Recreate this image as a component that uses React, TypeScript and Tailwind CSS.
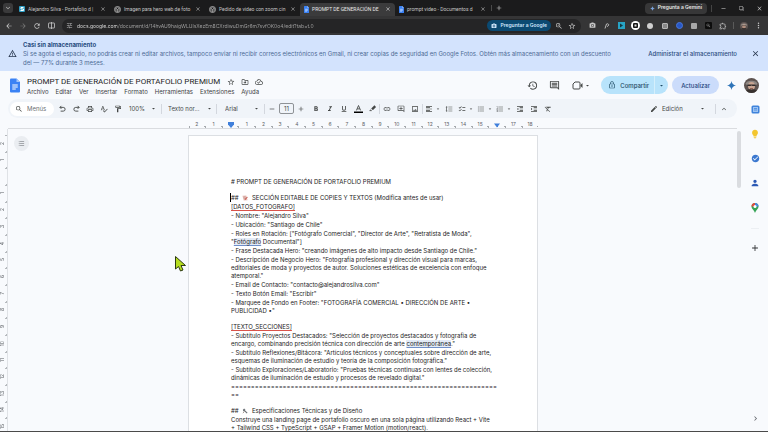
import type { ReactNode } from 'react';
import type { IconType } from 'react-icons';
import {
  MdAdd,
  MdArrowBack,
  MdArrowDropDown,
  MdArrowForward,
  MdCameraAlt,
  MdCheckCircle,
  MdChecklist,
  MdChevronRight,
  MdClose,
  MdEdit,
  MdExpandLess,
  MdExpandMore,
  MdFilterNone,
  MdFormatAlignLeft,
  MdFormatBold,
  MdFormatClear,
  MdFormatIndentDecrease,
  MdFormatIndentIncrease,
  MdFormatItalic,
  MdFormatLineSpacing,
  MdFormatListBulleted,
  MdFormatListNumbered,
  MdFormatUnderlined,
  MdHistory,
  MdLightbulb,
  MdLink,
  MdLockOutline,
  MdMoreVert,
  MdOutlineAddComment,
  MdOutlineCloudDone,
  MdOutlineComment,
  MdOutlineDriveFileMove,
  MdOutlineExtension,
  MdOutlineFormatPaint,
  MdOutlineImage,
  MdOutlinePrint,
  MdPerson,
  MdRefresh,
  MdRemove,
  MdSearch,
  MdSpellcheck,
  MdStarBorder,
  MdTune,
  MdWarningAmber,
  MdZoomIn,
} from 'react-icons/md';

const DocIcon = ({ className }: { className: string }) => (
  <svg viewBox="0 0 20 28" className={className} aria-hidden="true">
    <path d="M2 0h11l7 7v19a2 2 0 0 1-2 2H2a2 2 0 0 1-2-2V2a2 2 0 0 1 2-2z" fill="#3b82f4" />
    <path d="M13 0l7 7h-7z" fill="#a5c7fb" />
    <path d="M4.500 13h11M4.500 17h11M4.500 21h7" stroke="#fff" strokeWidth="2" />
  </svg>
);

const GptIcon = () => (
  <svg viewBox="0 0 16 16" className="size-[7px] shrink-0" fill="none" stroke="#d8d8d8" aria-hidden="true">
    <circle cx="8" cy="8" r="7" strokeWidth="1.500" />
    <path d="M8 3l4 2.500v5L8 13l-4-2.500v-5zM4 5.500l4 2.500 4-2.500M8 8v5" strokeWidth="1.300" />
  </svg>
);

const SiteIcon = () => (
  <svg viewBox="0 0 12 12" className="size-[6px] shrink-0" aria-hidden="true">
    <rect width="12" height="12" rx="2" fill="#2f9fc6" />
    <path d="M9 3H4v3h5v3H3" fill="none" stroke="#fff" strokeWidth="2" />
  </svg>
);

const Spark = ({ className }: { className: string }) => (
  <svg viewBox="0 0 24 24" className={className} aria-hidden="true">
    <path d="M12 0c1 7 5 11 12 12-7 1-11 5-12 12-1-7-5-11-12-12 7-1 11-5 12-12z" fill="currentColor" />
  </svg>
);

const Avatar = ({ className }: { className: string }) => (
  <svg viewBox="0 0 30 30" className={className} aria-hidden="true">
    <clipPath id="face">
      <circle cx="15" cy="15" r="15" />
    </clipPath>
    <g clipPath="url(#face)">
      <rect width="30" height="30" fill="#5d5350" />
      <path d="M3 12C4 3 26 3 27 12l-3 2H6z" fill="#8f8884" />
      <ellipse cx="15" cy="16" rx="7" ry="8" fill="#c9a592" />
      <path d="M7 13h16v3h-6l-2-1-2 1H7z" fill="#2f2a2a" />
      <path d="M3 30c1-7 6-8 12-7 6-1 11 0 12 7z" fill="#37312f" />
      <path d="M12 21h6" stroke="#7d4e43" strokeWidth="1.500" />
    </g>
  </svg>
);

const tabs = [
  { title: 'Alejandro Silva - Portafolio d |', icon: <SiteIcon /> },
  { title: 'Imagen para hero web de foto', icon: <GptIcon /> },
  { title: 'Pedido de video con zoom cin', icon: <GptIcon /> },
  { title: 'PROMPT DE GENERACIÓN DE', icon: <DocIcon className="h-[7px] w-[5px] shrink-0" />, active: true },
  { title: 'prompt video - Documentos d', icon: <DocIcon className="h-[7px] w-[5px] shrink-0" /> },
];

const TabBar = () => (
  <div className="flex h-4 items-center bg-[#1b1b1c] text-[#c4c4c4]">
    <button aria-label="Buscar pestañas" className="ml-[3px] mr-[2px] flex size-[10px] items-center justify-center rounded-[3px] bg-[#3a3a3b]">
      <MdExpandMore className="size-[8px]" />
    </button>
    <div className="flex h-full items-end">
      {tabs.map((tab) => (
        <div
          key={tab.title}
          className={`flex h-[13px] w-[95px] items-center gap-[3px] rounded-t-[4px] px-[4px] pb-px ${
            tab.active ? 'bg-[#3b3b3c] text-[#e6e6e6]' : ''
          }`}
        >
          {tab.icon}
          <button className="flex-1 whitespace-nowrap text-left font-[Roboto,sans-serif] text-[5px] leading-[10px]">
            {tab.title}
          </button>
          <button aria-label={`Cerrar ${tab.title}`}>
            <MdClose className="size-[6px]" />
          </button>
        </div>
      ))}
    </div>
    <span className="ml-px h-[6px] w-px bg-[#4a4a4a]" />
    <button aria-label="Nueva pestaña" className="ml-[3px]">
      <MdAdd className="size-[8px]" />
    </button>
    <div className="ml-auto flex items-center">
      <button className="flex h-[11px] items-center gap-[3px] rounded-[4px] bg-[#373738] px-[5px] text-[5px] font-semibold text-[#e6e6e6]">
        <Spark className="size-[5px] text-[#7ba4dd]" />
        Pregunta a Gemini
      </button>
      <span className="ml-[4px] h-[7px] w-px bg-[#444]" />
      <button aria-label="Minimizar" className="ml-[8px]">
        <MdRemove className="size-[7px]" />
      </button>
      <button aria-label="Restaurar" className="ml-[12px]">
        <MdFilterNone className="size-[5px] -scale-x-100" />
      </button>
      <button aria-label="Cerrar ventana" className="ml-[12px] mr-[5px]">
        <MdClose className="size-[7px]" />
      </button>
    </div>
  </div>
);

const ChromeButton = ({ label, icon: Icon }: { label: string; icon: IconType }) => (
  <button aria-label={label} className="flex w-[14px] justify-center">
    <Icon className="size-[8px]" />
  </button>
);

const Extension = ({ label, children }: { label: string; children: ReactNode }) => (
  <button aria-label={label} className="flex flex-1 items-center justify-center">
    {children}
  </button>
);

const AddressBar = () => (
  <div className="flex h-[19px] items-center bg-[#353536] pl-[2px] text-[#c9c9c9]">
    <ChromeButton label="Atrás" icon={MdArrowBack} />
    <span className="text-[#777]">
      <ChromeButton label="Adelante" icon={MdArrowForward} />
    </span>
    <ChromeButton label="Recargar" icon={MdRefresh} />
    <button aria-label="Pantalla dividida" className="flex w-[14px] justify-center">
      <svg viewBox="0 0 14 14" className="size-[7px]" fill="none" stroke="currentColor" strokeWidth="1.600">
        <rect x="1" y="2" width="12" height="10" rx="1" />
        <path d="M7 0v14" />
      </svg>
    </button>
    <div className="ml-[4px] flex h-[14px] flex-1 items-center rounded-full bg-[#252526] pl-[4px] pr-[5px]">
      <MdTune className="size-[7px]" />
      <input
        aria-label="Dirección"
        className="ml-[4px] min-w-0 flex-1 bg-[linear-gradient(90deg,#ececec_40px,#a4a4a4_40px)] bg-clip-text text-[5px] leading-[10px] text-transparent outline-none"
        defaultValue="docs.google.com/document/d/14hvAU9haigWLUlsXezEm8CXrdiwuDmGr6m7svfOK0o4/edit?tab=t.0"
      />
      <button className="flex h-[11px] items-center gap-[3px] whitespace-nowrap rounded-full bg-[#0b4a72] px-[4px] text-[5px] font-semibold text-[#cfe6fb]">
        <MdCameraAlt className="size-[6px]" />
        Preguntar a Google
      </button>
      <button aria-label="Zoom" className="ml-[4px]">
        <MdZoomIn className="size-[8px]" />
      </button>
      <button aria-label="Añadir a favoritos" className="ml-[5px]">
        <MdStarBorder className="size-[8px]" />
      </button>
    </div>
    <div className="ml-[4px] flex w-[145px] items-center">
      <Extension label="Cámara">
        <MdCameraAlt className="size-[7px]" />
      </Extension>
      <Extension label="Fuentes">
        <svg viewBox="0 0 12 12" className="size-[6px]" fill="none" stroke="#c9c9c9" strokeWidth="1.800">
          <path d="M2 11L5 2c4-2 7 3 1 5" />
        </svg>
      </Extension>
      <Extension label="Grabador">
        <svg viewBox="0 0 14 14" className="size-[7px]">
          <rect width="14" height="14" fill="#27a3c4" />
          <path d="M4 3l6 4-6 4z" fill="#123640" />
        </svg>
      </Extension>
      <Extension label="Notas">
        <svg viewBox="0 0 18 18" className="size-[9px]">
          <circle cx="9" cy="9" r="9" fill="#fff" />
          <rect x="4" y="4" width="10" height="10" rx="2" fill="#161616" />
          <path d="M7 7h4v4H7z" fill="#ddd" />
        </svg>
      </Extension>
      <Extension label="Color">
        <span className="size-[6px] rounded-full bg-[#cfcfcf]" />
      </Extension>
      <Extension label="Capturas">
        <span className="size-[6px] rounded-[1px] border border-[#b5b5b5] bg-[#888]" />
      </Extension>
      <Extension label="Traductor">
        <span className="size-[7px] rounded-full border border-[#4a78dc] bg-[#2757c4]" />
      </Extension>
      <Extension label="Lector">
        <span className="size-[6px] rounded-[1px] bg-[#a8a8a8]" />
      </Extension>
      <Extension label="Buscador">
        <span className="flex size-[7px] items-center justify-center rounded-[1px] bg-[#0c0c0c]">
          <MdSearch className="size-[5px]" />
        </span>
      </Extension>
      <Extension label="Extensiones del navegador">
        <MdOutlineExtension className="size-[8px]" />
      </Extension>
    </div>
    <span className="ml-[3px] h-[7px] w-px bg-[#5a5a5a]" />
    <button aria-label="Perfil" className="ml-[6px]">
      <Avatar className="size-[8px]" />
    </button>
    <button aria-label="Más opciones" className="ml-[6px] mr-[5px]">
      <MdMoreVert className="size-[9px]" />
    </button>
  </div>
);

const StorageBanner = () => (
  <section className="flex h-9 items-center bg-[#d3e3fd] pl-[8px] leading-[9px] text-[#4c6a95]">
    <MdWarningAmber className="size-[9px] shrink-0 text-[#27364d]" />
    <div className="ml-[6px] flex-1">
      <h2 className="font-bold text-[#284d80]">Casi sin almacenamiento</h2>
      <p>
        Si se agota el espacio, no podrás crear ni editar archivos, tampoco enviar ni recibir correos electrónicos en
        Gmail, ni crear copias de seguridad en Google Fotos. Obtén más almacenamiento con un descuento del — 77% durante
        3 meses.
      </p>
    </div>
    <a href="#almacenamiento" className="ml-[36px] whitespace-nowrap font-medium text-[#2b4d80]">
      Administrar el almacenamiento
    </a>
    <button aria-label="Cerrar aviso" className="ml-[14px] mr-[8px]">
      <MdClose className="size-[9px] text-[#27364d]" />
    </button>
  </section>
);

const menus = ['Archivo', 'Editar', 'Ver', 'Insertar', 'Formato', 'Herramientas', 'Extensiones', 'Ayuda'];

const Header = () => (
  <header className="flex h-7 items-center pl-[10px] pr-[9px] text-[#444746]">
    <DocIcon className="mt-px h-[15px] w-[10px] shrink-0" />
    <div className="ml-[7px] flex-1 pt-[3px]">
      <div className="flex items-center">
        <input
          aria-label="Nombre del documento"
          className="w-[194px] bg-transparent font-[Roboto,sans-serif] text-[8px] leading-[10px] text-[#1f1f1f] outline-none"
          defaultValue="PROMPT DE GENERACIÓN DE PORTAFOLIO PREMIUM"
        />
        <div className="ml-[6px] flex gap-[6px]">
          <button aria-label="Destacar">
            <MdStarBorder className="size-[8px]" />
          </button>
          <button aria-label="Mover">
            <MdOutlineDriveFileMove className="size-[8px]" />
          </button>
          <button aria-label="Estado del documento">
            <MdOutlineCloudDone className="size-[8px]" />
          </button>
        </div>
      </div>
      <nav className="flex gap-[7px] leading-[10px] text-[#3c4043]">
        {menus.map((menu) => (
          <button key={menu}>{menu}</button>
        ))}
      </nav>
    </div>
    <button aria-label="Historial">
      <MdHistory className="size-[11px]" />
    </button>
    <button aria-label="Comentarios" className="ml-[11px]">
      <MdOutlineComment className="size-[11px]" />
    </button>
    <button aria-label="Videollamada" className="ml-[12px] flex items-center">
      <svg viewBox="0 0 22 18" className="h-[9px] w-[11px]" fill="none" stroke="currentColor" strokeWidth="2">
        <path d="M6 2h8a2 2 0 0 1 2 2v10a2 2 0 0 1-2 2H4a2 2 0 0 1-2-2V6z" strokeLinejoin="round" />
        <path d="M17 8l4-4v10l-4-4z" fill="currentColor" stroke="none" />
      </svg>
      <MdArrowDropDown className="ml-px size-[7px]" />
    </button>
    <div className="ml-[10px] flex h-[18px] items-center rounded-full bg-[#b8e3fb] font-medium text-[#1d4a63]">
      <button className="flex h-full items-center gap-[4px] pl-[7px] pr-[5px]">
        <MdLockOutline className="size-[8px]" />
        Compartir
      </button>
      <span className="h-full w-px bg-[#d5effc]" />
      <button aria-label="Opciones para compartir" className="px-[3px]">
        <MdArrowDropDown className="size-[7px]" />
      </button>
    </div>
    <button className="ml-[4px] h-[18px] rounded-full bg-[#cbdcfb] px-[9px] font-medium text-[#24447c]">
      Actualizar
    </button>
    <button aria-label="Gemini" className="ml-[8px]">
      <Spark className="size-[9px] text-[#2f74b8]" />
    </button>
    <button aria-label="Cuenta" className="ml-[8px]">
      <Avatar className="size-[15px]" />
    </button>
  </header>
);

const Tool = ({ label, icon: Icon, dropdown }: { label: string; icon: IconType; dropdown?: boolean }) => (
  <button aria-label={label} className="flex items-center">
    <span className={dropdown ? 'flex w-3 justify-center' : 'flex w-[14px] justify-center'}>
      <Icon className="size-[8px]" />
    </span>
    {dropdown && <MdArrowDropDown className="mr-px size-[6px]" />}
  </button>
);

const DrawnTool = ({ label, children }: { label: string; children: ReactNode }) => (
  <button aria-label={label} className="flex w-[14px] justify-center">
    <svg viewBox="0 0 24 24" className="size-[9px]" fill="none" stroke="currentColor" strokeWidth="2.400">
      {children}
    </svg>
  </button>
);

const Picker = ({ label, value, className }: { label: string; value: string; className: string }) => (
  <div className={`flex items-center ${className}`}>
    <select aria-label={label} className="min-w-0 flex-1 appearance-none bg-transparent outline-none">
      <option>{value}</option>
    </select>
    <MdArrowDropDown className="size-[7px]" />
  </div>
);

const Divider = () => <span className="h-[10px] w-px shrink-0 bg-[#d3d7de]" />;

const Toolbar = () => (
  <div className="ml-[8px] mr-[5px] flex h-[19px] items-center rounded-full bg-[#f0f4f9] pl-[2px] pr-[9px] leading-[10px] text-[#444746]">
    <label className="flex h-[14px] w-11 items-center gap-[4px] rounded-full bg-white pl-[5px]">
      <MdSearch className="size-[8px] shrink-0" />
      <input aria-label="Menús" placeholder="Menús" className="w-full min-w-0 outline-none placeholder:text-[#6b6f73]" />
    </label>
    <span className="w-px" />
    <DrawnTool label="Deshacer">
      <path d="M9 5L5 9l4 4M5 9h9a5 5 0 0 1 0 10H7" />
    </DrawnTool>
    <DrawnTool label="Rehacer">
      <path d="M15 5l4 4-4 4M19 9h-9a5 5 0 0 0 0 10h7" />
    </DrawnTool>
    <Tool label="Imprimir" icon={MdOutlinePrint} />
    <Tool label="Ortografía" icon={MdSpellcheck} />
    <Tool label="Copiar formato" icon={MdOutlineFormatPaint} />
    <Picker label="Zoom" value="100%" className="w-9 pl-[4px] pr-[4px]" />
    <Divider />
    <Picker label="Estilo" value="Texto nor..." className="w-[54px] pl-[6px] pr-[3px]" />
    <Divider />
    <Picker label="Fuente" value="Arial" className="w-[47px] pl-[8px] pr-[4px]" />
    <Divider />
    <Tool label="Reducir tamaño" icon={MdRemove} />
    <input
      aria-label="Tamaño de fuente"
      defaultValue="11"
      className="h-[11px] w-[15px] rounded-[2px] border border-[#8e9296] text-center outline-none"
    />
    <Tool label="Aumentar tamaño" icon={MdAdd} />
    <span className="w-px" />
    <Tool label="Negrita" icon={MdFormatBold} />
    <Tool label="Cursiva" icon={MdFormatItalic} />
    <Tool label="Subrayado" icon={MdFormatUnderlined} />
    <DrawnTool label="Color del texto">
      <path d="M0 22h24" stroke="#000" strokeWidth="4" />
      <path d="M6.500 17L12 4l5.500 13M8.500 13h7" />
    </DrawnTool>
    <DrawnTool label="Resaltar">
      <path d="M4 18l3-3 3 3zM9 12l8-8 4 4-8 8z" fill="currentColor" strokeWidth="1" />
    </DrawnTool>
    <Divider />
    <Tool label="Enlace" icon={MdLink} />
    <Tool label="Añadir comentario" icon={MdOutlineAddComment} />
    <Tool label="Imagen" icon={MdOutlineImage} />
    <Divider />
    <Tool label="Alinear" icon={MdFormatAlignLeft} dropdown />
    <Tool label="Interlineado" icon={MdFormatLineSpacing} />
    <Tool label="Lista de control" icon={MdChecklist} dropdown />
    <Tool label="Viñetas" icon={MdFormatListBulleted} dropdown />
    <Tool label="Lista numerada" icon={MdFormatListNumbered} dropdown />
    <Tool label="Reducir sangría" icon={MdFormatIndentDecrease} />
    <Tool label="Aumentar sangría" icon={MdFormatIndentIncrease} />
    <Tool label="Borrar formato" icon={MdFormatClear} />
    <div className="ml-auto flex items-center">
      <MdEdit className="size-[8px]" />
      <Picker label="Modo" value="Edición" className="w-12 pl-[4px]" />
      <span className="w-[9px]" />
      <Divider />
      <button aria-label="Ocultar menús" className="ml-[4px]">
        <MdExpandLess className="size-[8px]" />
      </button>
    </div>
  </div>
);

const columns = [2, 1, 0, 1, 2, 3, 4, 5, 6, 7, 8, 9, 10, 11, 12, 13, 14, 15, 16, 17, 18];
const rows = columns.slice(0, 18);

const HorizontalRuler = () => (
  <div className="ml-[8px] mr-[5px] flex h-[11px] justify-center border-b border-[#dadce0] pr-[18px]">
    <div className="relative grid w-[350px] grid-cols-[repeat(21,1fr)] pt-px text-center text-[5px] leading-[10px] text-[#5f6368]">
      {columns.map((n, i) => (
        <span key={i} className="flex items-center justify-between">
          <i className="mt-[5px] h-[2px] w-px bg-[#a5a9ad]" />
          {n === 0 || n === 16 ? '' : n}
          <i className="mt-[5px] h-px w-px bg-[#a5a9ad]" />
        </span>
      ))}
      <svg viewBox="0 0 12 12" className="absolute left-[39px] top-[4px] size-[6px]">
        <path d="M0 0h12v5l-6 7-6-7z" fill="#3f7fdb" />
      </svg>
      <svg viewBox="0 0 12 12" className="absolute left-[305px] top-[4px] size-[6px]">
        <path d="M0 3h12l-6 8z" fill="#3f7fdb" />
      </svg>
    </div>
  </div>
);

const VerticalRuler = () => (
  <div className="w-[8px] shrink-0 overflow-hidden border-r border-[#dfe2e6] pt-[6px]">
    <div className="grid h-[300px] grid-rows-[repeat(18,1fr)] text-[5px] leading-[5px] text-[#5f6368]">
      {rows.map((n, i) => (
        <span key={i} className="flex flex-col items-end justify-between">
          <i className="h-px w-[2px] bg-[#b5b9bd]" />
          <b className="mr-[2px] rotate-180 font-normal [writing-mode:vertical-rl]">{n === 0 ? '' : n}</b>
          <i className="h-px w-px bg-[#b5b9bd]" />
        </span>
      ))}
    </div>
  </div>
);

const NoteEmoji = () => (
  <svg viewBox="0 0 14 14" className="mx-[2px] inline size-[6px] align-[-1px]" role="img" aria-label="Nota">
    <path d="M1 2l9-1 3 11-9 1z" fill="#e6bdb6" />
    <path d="M3 5l5-1M4 8l5-1" stroke="#b07f7a" />
    <path d="M6 10l6-6 1.500 1.500-6 6z" fill="#c4524a" />
  </svg>
);

const ToolsEmoji = () => (
  <svg viewBox="0 0 14 14" className="mx-[2px] inline size-[6px] align-[-1px]" role="img" aria-label="Herramientas">
    <path d="M2 4l3-3 3 3-1 1 6 6-2 2-6-6-2 1z" fill="#6d7378" />
    <path d="M2 12l4-4" stroke="#9a8f85" strokeWidth="2" />
  </svg>
);

const Typo = ({ children }: { children: ReactNode }) => (
  <span className="underline decoration-[#d9534a] decoration-1 underline-offset-1">{children}</span>
);

const Hint = ({ children }: { children: ReactNode }) => (
  <span className="bg-[#e3ebf7] underline decoration-[#6f8fc8] decoration-1 underline-offset-1">{children}</span>
);

// One entry per paragraph, each holding its lines. An empty entry is a blank line.
const paragraphs: ReactNode[][] = [
  ['# PROMPT DE GENERACIÓN DE PORTAFOLIO PREMIUM'],
  [],
  [<>## <NoteEmoji /> SECCIÓN EDITABLE DE COPIES Y TEXTOS (Modifica antes de usar)</>],
  [<Typo>[DATOS_FOTOGRAFO]</Typo>],
  ['- Nombre: "Alejandro Silva"'],
  ['- Ubicación: "Santiago de Chile"'],
  [
    '- Roles en Rotación: ["Fotógrafo Comercial", "Director de Arte", "Retratista de Moda",',
    <>"<Hint>Fotógrafo</Hint> Documental"]</>,
  ],
  ['- Frase Destacada Hero: "creando imágenes de alto impacto desde Santiago de Chile."'],
  [
    '- Descripción de Negocio Hero: "Fotografía profesional y dirección visual para marcas,',
    'editoriales de moda y proyectos de autor. Soluciones estéticas de excelencia con enfoque',
    'atemporal."',
  ],
  ['- Email de Contacto: "contacto@alejandrosilva.com"'],
  ['- Texto Botón Email: "Escribir"'],
  ['- Marquee de Fondo en Footer: "FOTOGRAFÍA COMERCIAL • DIRECCIÓN DE ARTE •', 'PUBLICIDAD •"'],
  [],
  [<Typo>[TEXTO_SECCIONES]</Typo>],
  [
    '- Subtítulo Proyectos Destacados: "Selección de proyectos destacados y fotografía de',
    <>encargo, combinando precisión técnica con dirección de arte <Hint>contemporánea</Hint>."</>,
  ],
  [
    '- Subtítulo Reflexiones/Bitácora: "Artículos técnicos y conceptuales sobre dirección de arte,',
    'esquemas de iluminación de estudio y teoría de la composición fotográfica."',
  ],
  [
    '- Subtítulo Exploraciones/Laboratorio: "Pruebas técnicas continuas con lentes de colección,',
    'dinámicas de iluminación de estudio y procesos de revelado digital."',
  ],
  ['='.repeat(67), '=='],
  [],
  [<>## <ToolsEmoji /> Especificaciones Técnicas y de Diseño</>],
  [
    'Construye una landing page de portafolio oscuro en una sola página utilizando React + Vite',
    '+ Tailwind CSS + TypeScript + GSAP + Framer Motion (motion/react).',
  ],
];

const Sheet = () => (
  <article className="relative flex w-[350px] flex-col gap-px whitespace-nowrap border border-b-0 border-[#dcdfe3] bg-white pl-[42px] pt-[42px] leading-[8px] text-[#1c1c1c]">
    {paragraphs.map((lines, i) =>
      lines.length === 0 ? (
        <div key={i} className="h-[6px] shrink-0" />
      ) : (
        <p key={i}>
          {lines.map((line, j) => (
            <span key={j} className="block">
              {line}
            </span>
          ))}
        </p>
      ),
    )}
    <span className="absolute left-[41px] top-[57px] h-[9px] w-px bg-black" />
  </article>
);

const Workspace = () => (
  <div className="relative flex min-h-0 flex-1 overflow-hidden">
    <VerticalRuler />
    <button
      aria-label="Pestañas y esquemas"
      className="absolute left-[14px] top-[7px] flex size-[15px] items-center justify-center rounded-full bg-[#eaedf1]"
    >
      <MdFormatListBulleted className="size-[7px] text-[#5f6368]" />
    </button>
    <main className="flex min-h-0 flex-1 justify-center overflow-hidden pr-[16px] pt-[6px]">
      <Sheet />
    </main>
    <div className="w-[8px] pt-[2px]">
      <div className="ml-[3px] h-[57px] w-[4px] rounded-full bg-[#dadce0]" />
    </div>
    <svg viewBox="0 0 22 32" className="absolute left-[175px] top-[127px] h-[16px] w-[11px]">
      <path d="M1 1v25l6-5 4 9 5-2-4-9h9z" fill="#b5dd1f" stroke="#2d3a12" strokeWidth="2" />
    </svg>
  </div>
);

const SidePanel = () => (
  <aside className="flex w-[26px] shrink-0 flex-col items-center pt-[6px]">
    <div className="flex flex-col items-center gap-[15px]">
      <button aria-label="Calendario">
        <svg viewBox="0 0 18 18" className="size-[9px]">
          <rect x="1" y="1" width="16" height="16" rx="3" fill="#3f83dc" />
          <rect x="4" y="4" width="10" height="10" fill="#9cc3f2" />
          <path d="M6 7h6M6 10h6" stroke="#3f83dc" strokeWidth="1.500" />
        </svg>
      </button>
      <button aria-label="Keep">
        <MdLightbulb className="size-[10px] text-[#f3c62f]" />
      </button>
      <button aria-label="Tareas">
        <MdCheckCircle className="size-[9px] text-[#3b78d0]" />
      </button>
      <button aria-label="Contactos">
        <MdPerson className="size-[10px] text-[#2b58b4]" />
      </button>
      <button aria-label="Maps">
        <svg viewBox="0 0 16 20" className="h-[10px] w-[8px]">
          <path d="M8 0a7 7 0 0 1 7 7c0 5-5 7-7 13C6 14 1 12 1 7a7 7 0 0 1 7-7z" fill="#35a355" />
          <path d="M8 0a7 7 0 0 0-7 7l7 0z" fill="#e04a3c" />
          <path d="M8 0a7 7 0 0 1 7 7H8z" fill="#4a86e0" />
          <circle cx="8" cy="7" r="3" fill="#fff" />
        </svg>
      </button>
    </div>
    <span className="mt-[15px] h-px w-[8px] bg-[#eceff3]" />
    <button aria-label="Instalar complementos" className="mt-[14px]">
      <MdAdd className="size-[10px] text-[#2f3133]" />
    </button>
    <button aria-label="Ocultar panel lateral" className="mb-[8px] mt-auto">
      <MdChevronRight className="size-[9px] text-[#5f6368]" />
    </button>
  </aside>
);

const App = () => {
  return (
    <div className="flex h-screen flex-col overflow-hidden border-b border-[#4a4a4a] bg-[#f8fafd] font-[Inter,'Liberation_Sans',sans-serif] text-[6px]">
      <TabBar />
      <AddressBar />
      <StorageBanner />
      <Header />
      <div className="flex min-h-0 flex-1">
        <div className="flex min-w-0 flex-1 flex-col">
          <Toolbar />
          <HorizontalRuler />
          <Workspace />
        </div>
        <SidePanel />
      </div>
    </div>
  );
};

export default App;
